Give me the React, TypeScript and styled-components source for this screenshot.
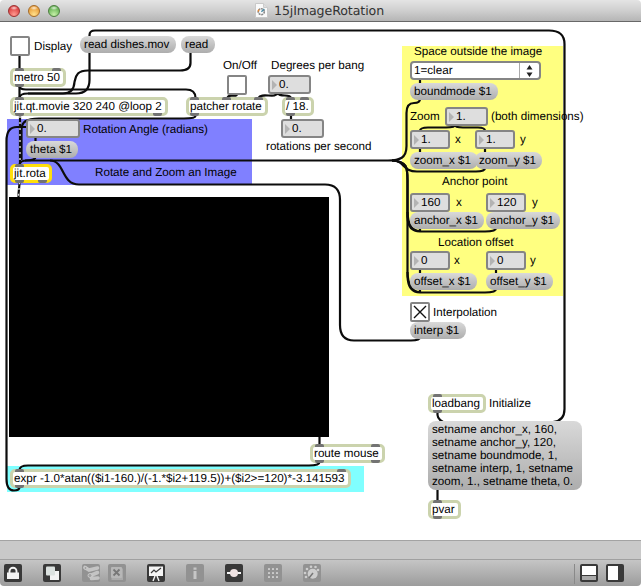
import React from "react";
import styled, { createGlobalStyle, css } from "styled-components";

const Global = createGlobalStyle`
  * { box-sizing: border-box; }
  body { margin: 0; overflow: hidden; background: #fff; }
`;

const Window = styled.div`
  width: 641px;
  height: 586px;
  display: flex;
  flex-direction: column;
  background: #fff;
  color: #000;
  font: 11.65px/13px "Liberation Sans", Arial, sans-serif;
  text-rendering: geometricPrecision;
`;

const TitleBar = styled.header`
  height: 22px;
  flex: none;
  display: grid;
  grid-template-columns: 255px auto 1fr;
  align-items: center;
  background: linear-gradient(#e4e4e4, #cfcfcf 50%, #b5b5b5);
  border-bottom: 1px solid #686868;
  border-radius: 4px 4px 0 0;
`;

const Lights = styled.div`
  display: flex;
  gap: 8px;
  padding: 0 0 0 8px;
`;

const Light = styled.span<{ $rim: string; $fill: string; $glow: string }>`
  width: 12px;
  height: 12px;
  border-radius: 50%;
  border: 1px solid ${(p) => p.$rim};
  background:
    radial-gradient(ellipse 4px 2px at 50% 20%, #fffc, #fff0),
    radial-gradient(circle at 50% 85%, ${(p) => p.$glow}, ${(p) => p.$fill} 70%);
`;

const Title = styled.div`
  display: flex;
  align-items: center;
  gap: 6px;
  color: #333;
  font: 12.6px/16px "DejaVu Sans", sans-serif;
  letter-spacing: -0.1px;
  white-space: nowrap;
  padding-bottom: 1px;
`;

const TitleText = styled.span`
  position: relative;
  top: 1px;
`;

const Canvas = styled.main`
  position: relative;
  flex: 1;
  overflow: hidden;
`;

const Wires = styled.svg`
  position: absolute;
  left: 0;
  top: 0;
  fill: none;
  stroke: #0c0c0c;
  stroke-width: 2.2;
`;

type Place = { $x: number; $y: number; $w?: number; $h?: number };

const placed = css<Place>`
  position: absolute;
  left: ${(p) => p.$x}px;
  top: ${(p) => p.$y - 22}px;
  width: ${(p) => (p.$w ? `${p.$w}px` : "auto")};
  height: ${(p) => (p.$h ? `${p.$h}px` : "auto")};
  white-space: nowrap;
`;

const Panel = styled.div<Place & { $color: string }>`
  ${placed}
  background: ${(p) => p.$color};
`;

const Comment = styled.span<Place>`
  ${placed}
`;

const Message = styled.div<Place>`
  ${placed}
  padding: 2px 4px;
  border-radius: 8px;
  background: linear-gradient(#d9d9d9, #adadad);
`;

const NumberBox = styled.div<Place>`
  ${placed}
  display: flex;
  align-items: center;
  gap: 5px;
  padding-left: 2px;
  border: 2px solid #858585;
  border-radius: 3px;
  background: #dedede;

  &::before {
    content: "";
    border-left: 5px solid #b3b3b3;
    border-top: 5px solid transparent;
    border-bottom: 5px solid transparent;
    margin-right: -3px;
  }
`;

const Toggle = styled.div<Place>`
  ${placed}
  border: 2px solid #858585;
  border-radius: 2px;
  background: #fff;
  svg { display: block; }
`;

const Menu = styled.div<Place>`
  ${placed}
  display: grid;
  grid-template-columns: 1fr 20px;
  align-items: center;
  padding-left: 2px;
  border: 2px solid #858585;
  border-radius: 4px;
  background: #fff;
`;

const MenuArrows = styled.span`
  display: grid;
  place-items: center;
  height: 100%;
  border-left: 1px solid #aaa;
`;

const ObjectBox = styled.div<Place & { $selected?: boolean }>`
  ${placed}
  padding: 0 1px;
  border: 3px solid ${(p) => (p.$selected ? "#ffdf0c" : "#cbd3ad")};
  border-radius: 5px;
  background: #fff;
`;

const Port = styled.i<{ $at: number; $out?: boolean }>`
  position: absolute;
  left: ${(p) => p.$at - 8}px;
  ${(p) => (p.$out ? "bottom: -3px;" : "top: -3px;")}
  width: 9px;
  height: 3px;
  border-radius: ${(p) => (p.$out ? "0 0 2px 2px" : "2px 2px 0 0")};
  background: #737373;
`;

const Status = styled.div`
  flex: none;
  height: 19px;
  background: #c9c9c9;
  border-top: 1px solid #a3a3a3;
`;

const Toolbar = styled.footer`
  flex: none;
  height: 27px;
  display: flex;
  align-items: flex-start;
  padding: 4px 17px 0 4px;
  border-top: 1px solid #a0a0a0;
  border-radius: 0 0 4px 4px;
  background: linear-gradient(#c5c5c5, #9c9c9c);
`;

const Tools = styled.div`
  display: flex;
  gap: 21px;
  flex: 1;
`;

const ToolPair = styled.div`
  display: flex;
  gap: 8px;
`;

const ViewTools = styled(ToolPair)`
  height: 20px;
  padding-left: 5px;
  border-left: 1px solid #898989;
`;

const ToolButton = styled.button<{ $dim?: boolean }>`
  width: 18px;
  height: 18px;
  padding: 0;
  border: 0;
  border-radius: 2px;
  background: ${(p) => (p.$dim ? "#929292" : "#393939")};
  color: ${(p) => (p.$dim ? "#c6c6c6" : "#f4f4f4")};
  svg { display: block; }
`;

const Tool = ({ dim, label, children }: { dim?: boolean; label: string; children: React.ReactNode }) => (
  <ToolButton $dim={dim} aria-label={label}>
    <svg width="18" height="18" viewBox="0 0 18 18" fill="currentColor">{children}</svg>
  </ToolButton>
);

type Obj = {
  text: string; x: number; y: number; w: number;
  ins: number[]; outs: number[]; selected?: boolean;
};

const objects: Obj[] = [
  { text: "metro 50", x: 10, y: 68, w: 56, ins: [19.5, 57], outs: [19.5] },
  { text: "jit.qt.movie 320 240 @loop 2", x: 10, y: 97, w: 158, ins: [19.5], outs: [19.5, 158] },
  { text: "patcher rotate", x: 186, y: 97, w: 82, ins: [195, 227, 259], outs: [195] },
  { text: "/ 18.", x: 282, y: 97, w: 32, ins: [291, 305], outs: [291] },
  { text: "jit.rota", x: 10, y: 164, w: 42, ins: [19.5], outs: [19.5, 42.5], selected: true },
  { text: "route mouse", x: 310, y: 444, w: 75, ins: [319.5, 375.5], outs: [319.5, 375.5] },
  { text: "expr -1.0*atan(($i1-160.)/(-1.*$i2+119.5))+($i2>=120)*-3.141593", x: 10, y: 469, w: 341, ins: [19.5, 341.5], outs: [19.5] },
  { text: "loadbang", x: 428, y: 394, w: 58, ins: [437.5], outs: [437.5] },
  { text: "pvar", x: 428, y: 500, w: 33, ins: [437.5], outs: [437.5] },
];

const messages: [string, number, number, number][] = [
  ["read dishes.mov", 80, 36, 96],
  ["read", 181, 36, 34],
  ["theta $1", 26, 141, 52],
  ["boundmode $1", 410, 83, 88],
  ["zoom_x $1", 410, 152, 68],
  ["zoom_y $1", 475, 152, 67],
  ["anchor_x $1", 410, 212, 74],
  ["anchor_y $1", 486, 212, 74],
  ["offset_x $1", 410, 273, 67],
  ["offset_y $1", 486, 273, 67],
  ["interp $1", 410, 322, 56],
];

const numbers: [string, number, number, number][] = [
  ["0.", 26, 119, 54],
  ["0.", 268, 75, 43],
  ["0.", 281, 119, 43],
  ["1.", 445, 107, 43],
  ["1.", 410, 130, 40],
  ["1.", 475, 130, 40],
  ["160", 410, 193, 40],
  ["120", 486, 193, 40],
  ["0", 410, 251, 40],
  ["0", 486, 251, 40],
];

const comments: [string, number, number][] = [
  ["Display", 34, 40],
  ["On/Off", 223, 59],
  ["Degrees per bang", 271, 59],
  ["rotations per second", 266, 140],
  ["Rotation Angle (radians)", 83, 123],
  ["Rotate and Zoom an Image", 95, 166],
  ["Space outside the image", 414, 45],
  ["Zoom", 410, 110],
  ["(both dimensions)", 491, 110],
  ["x", 455, 133],
  ["y", 520, 133],
  ["Anchor point", 442, 175],
  ["x", 456, 196],
  ["y", 532, 196],
  ["Location offset", 438, 236],
  ["x", 454, 254],
  ["y", 530, 254],
  ["Interpolation", 433, 306],
  ["Initialize", 489, 397],
];

const cords = [
  "M19.5 56V68", "M19.5 86V98",
  "M19.5 86Q19.5 89.5 26 89.5H186Q195.5 89.5 195.5 98",
  "M89.5 37V35Q89.5 30.5 95 30.5H549Q564.5 30.5 564.5 44V409Q564.5 421 553 422",
  "M437.5 412V415Q438 421 447 423",
  "M89.5 53V80Q89.5 93.5 76 93.5H28Q19.5 93.5 19.5 98",
  "M190.5 53V63Q190.5 70.5 180 70.5H88C76 70.5 76 77 74.5 82C74 90 70 93.5 63 93.5H28",
  "M195.5 116Q195.5 118.5 184 118.5H39C26 118.5 21.5 122 21.5 130V160",
  "M19.5 487Q19.5 490.5 14 490.5Q6.5 490.5 6.5 479V141Q6.5 127 17 127H26",
  "M35.5 137V142", "M35.5 157Q35.5 160.5 25 160.5",
  "M19.5 165Q19.5 160.5 27 160.5H388C400 160.5 406.5 158 406.5 146V113Q406.5 103 414 103Q420 103 420 99",
  "M392 160.5C405 160.5 402 171.5 417 171.5H476Q485 171.5 485 168",
  "M392 160.5C407 161 407.5 168 407.5 180V217Q408 231.5 420 231.5H485Q496 231.5 496 228",
  "M392 160.5C407 161 407.5 168 407.5 180V276Q408 292.5 420 292.5H485Q496 292.5 496 289",
  "M407.5 212Q408 231 420 231V228", "M407.5 272Q408 292 420 292V289",
  "M50 160.5C65 160.5 61 184.5 79 184.5H325Q340 184.5 340 200V325Q340 340.5 354 340.5H411Q420 340.5 420 337",
  "M455 125Q455 127.5 446 127.5H428Q420 127.5 420 131", "M455 125Q455 127.5 463 127.5H478Q485 127.5 485 131",
  "M420 148V153", "M485 148V153", "M420 79V84", "M420 211V213", "M496 211V213", "M420 269V274", "M496 269V274",
  "M237 94C237 98 228 93 227.5 98", "M278 93C276 99 261 92 258.5 98", "M278 93C280 98 290 93 291 98",
  "M291 115V120", "M319.5 437V445", "M319.5 462Q319.5 465.5 309 465.5H28Q19.5 465.5 19.5 470",
  "M437.5 489V501",
];

const matrixCords = ["M20 116V165", "M19.5 182C19.5 188 18.5 189 18.5 197"];

export default function App() {
  return (
    <Window>
      <Global />
      <TitleBar>
        <Lights>
          <Light $rim="#9c3030" $fill="#dc4242" $glow="#ff9b91" />
          <Light $rim="#a56b28" $fill="#e9a03d" $glow="#ffe18c" />
          <Light $rim="#4d7e40" $fill="#69b557" $glow="#c6f0a8" />
        </Lights>
        <Title>
          <svg width="13" height="15" viewBox="0 0 13 15">
            <path d="M.5.5h8l4 4v10H.5z" fill="#fafafa" stroke="#c9c9c9" />
            <path d="M8.5.5v4h4" fill="#ddd" stroke="#ccc" />
            <circle cx="6.3" cy="8.7" r="3" fill="none" stroke="#888" strokeWidth="1.6" strokeDasharray="2 .7" />
            <path d="M3 8.5l1-2" stroke="#e88a33" strokeWidth="1.6" />
            <path d="M6.4 8.7L9.3 6" stroke="#4b8ca5" strokeWidth="1.4" />
          </svg>
          <TitleText>15jImageRotation</TitleText>
        </Title>
      </TitleBar>

      <Canvas>
        <Panel $x={7} $y={119} $w={245} $h={66} $color="#8080ff" />
        <Panel $x={402} $y={46} $w={161} $h={250} $color="#ffff80" />
        <Panel $x={7} $y={466} $w={357} $h={26} $color="#80ffff" />

        <Wires width="641" height="518" viewBox="0 22 641 518">
          {cords.map((d) => <path key={d} d={d} />)}
          {matrixCords.map((d) => (
            <g key={d}>
              <path d={d} />
              <path d={d} stroke="#ddd" strokeWidth="1.4" strokeDasharray="2 4" />
            </g>
          ))}
        </Wires>

        <Panel $x={9} $y={197} $w={320} $h={240} $color="#000" />

        <Toggle $x={10} $y={36} $w={20} $h={20} />
        <Toggle $x={227} $y={75} $w={20} $h={20} />
        <Toggle $x={410} $y={302} $w={20} $h={20}>
          <svg width="16" height="16"><path d="M2 2l12 12M14 2L2 14" stroke="#111" strokeWidth="1.4" /></svg>
        </Toggle>

        <Menu $x={410} $y={61} $w={131} $h={19}>
          1=clear
          <MenuArrows>
            <svg width="7" height="12"><path d="M3.5 0L6.5 4.5h-6zM3.5 12L6.5 7.5h-6z" fill="#222" /></svg>
          </MenuArrows>
        </Menu>

        {messages.map(([text, x, y, w]) => (
          <Message key={text} $x={x} $y={y} $w={w} $h={17}>{text}</Message>
        ))}
        <Message $x={428} $y={421} $w={154} $h={69}>
          setname anchor_x, 160,<br />setname anchor_y, 120,<br />setname boundmode, 1,<br />
          setname interp, 1, setname<br />zoom, 1., setname theta, 0.
        </Message>
        {numbers.map(([text, x, y, w]) => (
          <NumberBox key={`${x}-${y}`} $x={x} $y={y} $w={w} $h={19}>{text}</NumberBox>
        ))}
        {objects.map((o) => (
          <ObjectBox key={o.text} $x={o.x} $y={o.y} $w={o.w} $h={19} $selected={o.selected}>
            {o.text}
            {o.ins.map((p) => <Port key={`in${p}`} $at={p - o.x} />)}
            {o.outs.map((p) => <Port key={`out${p}`} $at={p - o.x} $out />)}
          </ObjectBox>
        ))}
        {comments.map(([text, x, y]) => (
          <Comment key={`${text}-${x}-${y}`} $x={x} $y={y}>{text}</Comment>
        ))}
      </Canvas>

      <Status />
      <Toolbar>
        <Tools>
          <Tool label="Lock">
            <path d="M3 8.5h12V15H3z" />
            <path d="M5.500 9V7a3.500 3.300 0 0 1 7 0v2" fill="none" stroke="currentColor" strokeWidth="1.9" />
          </Tool>
          <Tool label="New object">
            <path d="M7 7h9v9H7z" />
            <rect x="3" y="2.500" width="9" height="9" rx="1" fill="#dce2e0" />
          </Tool>
          <ToolPair>
            <Tool dim label="Patch cords">
              <g fill="none" stroke="#c4c4c4" strokeWidth="3.6" strokeLinecap="round">
                <path d="M3 3.500L7 6L15.500 4M8.500 11.500L15.500 8.500M9.500 14.500L16 14" />
              </g>
              <g fill="#a0a0a0" stroke="#d0d0d0" strokeWidth=".8">
                <circle cx="3.500" cy="4" r="1.500" />
                <circle cx="8" cy="11.500" r="2" />
              </g>
            </Tool>
            <Tool dim label="Remove">
              <path d="M14 4l1 1v11H4l-1-1z" fill="#aaa" />
              <rect x="3" y="3" width="11" height="11" rx="1" fill="#b7b7b7" />
              <path d="M5.500 5.500l6 6m0-6l-6 6" stroke="#777" strokeWidth="1.8" />
            </Tool>
          </ToolPair>
          <Tool label="Presentation">
            <path d="M2 2.500h14V12H2z" />
            <path d="M8 12l-2 5M10 12l2 5" stroke="#f4f4f4" strokeWidth="1.4" />
            <path d="M4 9l3-3 2 2 5-4" fill="none" stroke="#393939" strokeWidth="1.2" />
          </Tool>
          <Tool dim label="Inspector"><path d="M7.500 3.500h3v2.300h-3zM7.500 7h3v8h-3z" /></Tool>
          <Tool label="Snap"><path d="M2 8h14v2H2z" /><circle cx="9" cy="9" r="4" fill="#eee2e2" /></Tool>
          <Tool dim label="Grid">
            {[4, 8, 12].map((x) => [4, 8, 12].map((y) => <rect key={`${x}-${y}`} x={x} y={y} width="2" height="2" rx=".4" fill="#d0d0d0" />))}
          </Tool>
          <Tool dim label="Settings">
            <g fill="#cecece">
              <circle cx="9.700" cy="9.700" r="5" />
              {[[3, 13], [2, 9], [4, 5], [8, 2.7], [12.5, 3], [15, 6]].map(([x, y]) => <circle key={x} cx={x} cy={y} r="1.3" />)}
            </g>
            <path d="M10 9l-4 5" stroke="#777" strokeWidth="1.500" />
          </Tool>
        </Tools>
        <ViewTools>
          <Tool label="Bottom panel"><path d="M2 2h14v9H2z" fill="#fff" /><path d="M2 12h14v4H2z" fill="#a9a9a9" /></Tool>
          <Tool label="Side panel"><path d="M2 2h10v14H2z" fill="#fff" /></Tool>
        </ViewTools>
      </Toolbar>
    </Window>
  );
}
